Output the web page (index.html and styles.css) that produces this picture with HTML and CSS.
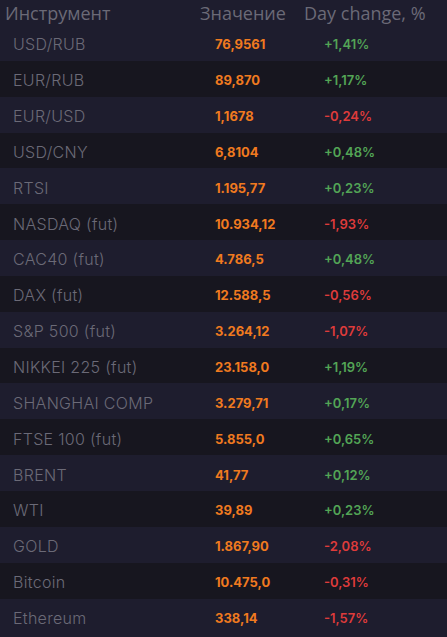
FILE: index.html
```html
<!DOCTYPE html>
<html lang="ru">
<head>
<meta charset="utf-8">
<link rel="stylesheet" href="styles.css">
</head>
<body>
<div class="quotes">
  <div class="head">
    <span class="h-name">Инструмент</span>
    <span class="h-value">Значение</span>
    <span class="h-change">Day change, %</span>
  </div>
  <div class="row"><span class="name">USD/RUB</span><span class="value">76,9561</span><span class="change up">+1,41%</span></div>
  <div class="row"><span class="name">EUR/RUB</span><span class="value">89,870</span><span class="change up">+1,17%</span></div>
  <div class="row"><span class="name">EUR/USD</span><span class="value">1,1678</span><span class="change down">-0,24%</span></div>
  <div class="row"><span class="name">USD/CNY</span><span class="value">6,8104</span><span class="change up">+0,48%</span></div>
  <div class="row"><span class="name">RTSI</span><span class="value">1.195,77</span><span class="change up">+0,23%</span></div>
  <div class="row"><span class="name">NASDAQ (fut)</span><span class="value">10.934,12</span><span class="change down">-1,93%</span></div>
  <div class="row"><span class="name">CAC40 (fut)</span><span class="value">4.786,5</span><span class="change up">+0,48%</span></div>
  <div class="row"><span class="name">DAX (fut)</span><span class="value">12.588,5</span><span class="change down">-0,56%</span></div>
  <div class="row"><span class="name">S&amp;P 500 (fut)</span><span class="value">3.264,12</span><span class="change down">-1,07%</span></div>
  <div class="row"><span class="name">NIKKEI 225 (fut)</span><span class="value">23.158,0</span><span class="change up">+1,19%</span></div>
  <div class="row"><span class="name">SHANGHAI COMP</span><span class="value">3.279,71</span><span class="change up">+0,17%</span></div>
  <div class="row"><span class="name">FTSE 100 (fut)</span><span class="value">5.855,0</span><span class="change up">+0,65%</span></div>
  <div class="row"><span class="name">BRENT</span><span class="value">41,77</span><span class="change up">+0,12%</span></div>
  <div class="row"><span class="name">WTI</span><span class="value">39,89</span><span class="change up">+0,23%</span></div>
  <div class="row"><span class="name">GOLD</span><span class="value">1.867,90</span><span class="change down">-2,08%</span></div>
  <div class="row"><span class="name">Bitcoin</span><span class="value">10.475,0</span><span class="change down">-0,31%</span></div>
  <div class="row"><span class="name">Ethereum</span><span class="value">338,14</span><span class="change down">-1,57%</span></div>
</div>
</body>
</html>
```
FILE: styles.css
```css
html, body {
  margin: 0;
  padding: 0;
  background: #1e1d2e;
}
.quotes {
  width: 447px;
  display: flex;
  flex-direction: column;
}
.head {
  height: 25px;
  display: flex;
  align-items: center;
  background: #1e1d2e;
  color: #6b6a77;
  font-family: "Open Sans", sans-serif;
  font-size: 18px;
  line-height: 24px;
}
.h-name {
  padding-left: 5px;
  width: 195px;
}
.h-value {
  width: 104px;
}
.row {
  box-sizing: border-box;
  height: 35.85px;
  padding-top: 3px;
  display: grid;
  grid-template-columns: 202px 109px 1fr;
  align-items: center;
  padding-left: 13px;
  background: #1e1d2e;
}
.row:nth-child(odd) {
  background: #17161f;
}
.name {
  font-family: "Inter", sans-serif;
  font-weight: 300;
  font-size: 16px;
  letter-spacing: 0.3px;
  color: #6b6a77;
}
.value {
  font-family: "Inter", sans-serif;
  font-weight: 700;
  font-size: 13px;
  color: #f07a1f;
}
.change {
  font-family: "Inter", sans-serif;
  font-weight: 600;
  font-size: 13px;
}
.up { color: #53a556; }
.down { color: #de3b3b; }
```
